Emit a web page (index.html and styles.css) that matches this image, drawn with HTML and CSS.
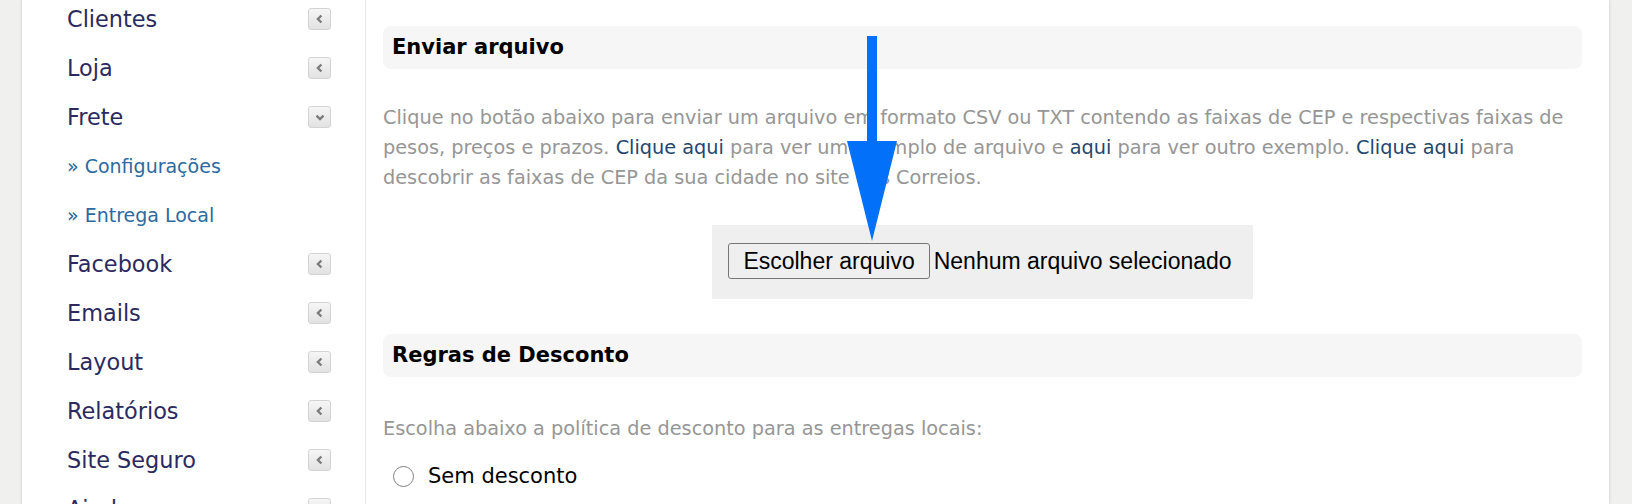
FILE: index.html
```html
<!DOCTYPE html>
<html lang="pt-BR">
<head>
    <meta charset="UTF-8">
    <meta name="viewport" content="width=device-width, initial-scale=1.0">
    <title>Frete - Entrega Local</title>
    <link rel="stylesheet" href="styles.css">
</head>
<body>
    <div class="page">
        <aside class="sidebar">
            <ul class="menu">
                <li class="menu-item"><a href="#">Clientes</a><span class="toggle"><svg viewBox="0 0 10 10"><path d="M6 2.5 3.5 5 6 7.5"/></svg></span></li>
                <li class="menu-item"><a href="#">Loja</a><span class="toggle"><svg viewBox="0 0 10 10"><path d="M6 2.5 3.5 5 6 7.5"/></svg></span></li>
                <li class="menu-item"><a href="#">Frete</a><span class="toggle"><svg viewBox="0 0 10 10"><path d="M2.5 4 5 6.5 7.5 4"/></svg></span></li>
                <li class="sub-item"><a href="#">» Configurações</a></li>
                <li class="sub-item"><a href="#">» Entrega Local</a></li>
                <li class="menu-item"><a href="#">Facebook</a><span class="toggle"><svg viewBox="0 0 10 10"><path d="M6 2.5 3.5 5 6 7.5"/></svg></span></li>
                <li class="menu-item"><a href="#">Emails</a><span class="toggle"><svg viewBox="0 0 10 10"><path d="M6 2.5 3.5 5 6 7.5"/></svg></span></li>
                <li class="menu-item"><a href="#">Layout</a><span class="toggle"><svg viewBox="0 0 10 10"><path d="M6 2.5 3.5 5 6 7.5"/></svg></span></li>
                <li class="menu-item"><a href="#">Relatórios</a><span class="toggle"><svg viewBox="0 0 10 10"><path d="M6 2.5 3.5 5 6 7.5"/></svg></span></li>
                <li class="menu-item"><a href="#">Site Seguro</a><span class="toggle"><svg viewBox="0 0 10 10"><path d="M6 2.5 3.5 5 6 7.5"/></svg></span></li>
                <li class="menu-item"><a href="#">Ajuda</a><span class="toggle"><svg viewBox="0 0 10 10"><path d="M6 2.5 3.5 5 6 7.5"/></svg></span></li>
            </ul>
        </aside>

        <main class="content">
            <h2 class="section-title">Enviar arquivo</h2>
            <p class="help">
                Clique no botão abaixo para enviar um arquivo em formato CSV ou TXT contendo as faixas de CEP e respectivas faixas de<br>
                pesos, preços e prazos. <a href="#">Clique aqui</a> para ver um exemplo de arquivo e <a href="#">aqui</a> para ver outro exemplo. <a href="#">Clique aqui</a> para<br>
                descobrir as faixas de CEP da sua cidade no site dos Correios.
            </p>

            <div class="upload">
                <span class="file-btn">Escolher arquivo</span>
                <span class="file-name">Nenhum arquivo selecionado</span>
            </div>

            <h2 class="section-title">Regras de Desconto</h2>
            <p class="help help-short">Escolha abaixo a política de desconto para as entregas locais:</p>

            <label class="radio-row"><span class="radio"></span>Sem desconto</label>

            <svg class="arrow" viewBox="0 0 50 205">
                <rect x="20" y="0" width="10" height="106"/>
                <polygon points="0,105 50,105 25,205"/>
            </svg>
        </main>
    </div>
</body>
</html>
```

FILE: styles.css
```css
body {
    margin: 0;
    padding: 0;
    background: #f0f0ef;
    font-family: "DejaVu Sans", Verdana, sans-serif;
    height: 504px;
    overflow: hidden;
}
a {
    text-decoration: none;
}
.page {
    display: flex;
    margin: 0 23px 0 22px;
    height: 504px;
    background: #fff;
    box-shadow: 0 0 3px rgba(0, 0, 0, 0.18);
    overflow: hidden;
}
.sidebar {
    width: 264px;
    flex-shrink: 0;
    padding: 0 34px 0 45px;
    border-right: 1px solid #e9e9e9;
}
.menu {
    list-style: none;
    margin: -6px 0 0;
    padding: 0;
}
.menu li {
    display: flex;
    align-items: center;
    justify-content: space-between;
    height: 49px;
}
.menu-item a {
    font-size: 22.4px;
    color: #2b2a5e;
}
.sub-item a {
    font-size: 19px;
    color: #2c6aa0;
}
.toggle {
    width: 21px;
    height: 20px;
    border: 1px solid #d3d3d3;
    border-radius: 3px;
    background: linear-gradient(#f6f6f6, #e2e2e2);
    display: flex;
    align-items: center;
    justify-content: center;
}
.toggle svg {
    width: 14px;
    height: 14px;
    fill: none;
    stroke: #7c7c7c;
    stroke-width: 1.7;
}
.content {
    position: relative;
    flex: 1;
    padding: 26px 27px 0 17px;
}
.section-title {
    margin: 0;
    height: 43px;
    line-height: 43px;
    padding: 0 9px;
    background: #f6f6f6;
    border-radius: 8px;
    font-size: 21px;
    font-weight: bold;
    color: #000;
}
.help {
    margin: 34px 0 32px;
    font-size: 19.3px;
    line-height: 30px;
    color: #969696;
    white-space: nowrap;
}
.help a {
    color: #24466e;
}
.help-short {
    margin: 37px 0 0;
}
.upload {
    display: flex;
    align-items: center;
    width: fit-content;
    margin: 0 auto 35px;
    padding: 18px 21px 20px 16px;
    background: #efefef;
    font-family: "Liberation Sans", Arial, sans-serif;
    font-size: 23px;
    color: #000;
}
.file-btn {
    height: 34px;
    line-height: 34px;
    padding: 0 14px;
    border: 1px solid #767676;
    border-radius: 3px;
    background: #efefef;
    margin-right: 4px;
}
.radio-row {
    display: flex;
    align-items: center;
    height: 34px;
    margin-top: 15px;
    padding-left: 10px;
    font-size: 21px;
    color: #000;
}
.radio {
    width: 19px;
    height: 19px;
    border: 1px solid #808080;
    border-radius: 50%;
    margin-right: 14px;
}
.arrow {
    position: absolute;
    left: 481px;
    top: 36px;
    width: 50px;
    height: 205px;
    fill: #0270f8;
}
```
